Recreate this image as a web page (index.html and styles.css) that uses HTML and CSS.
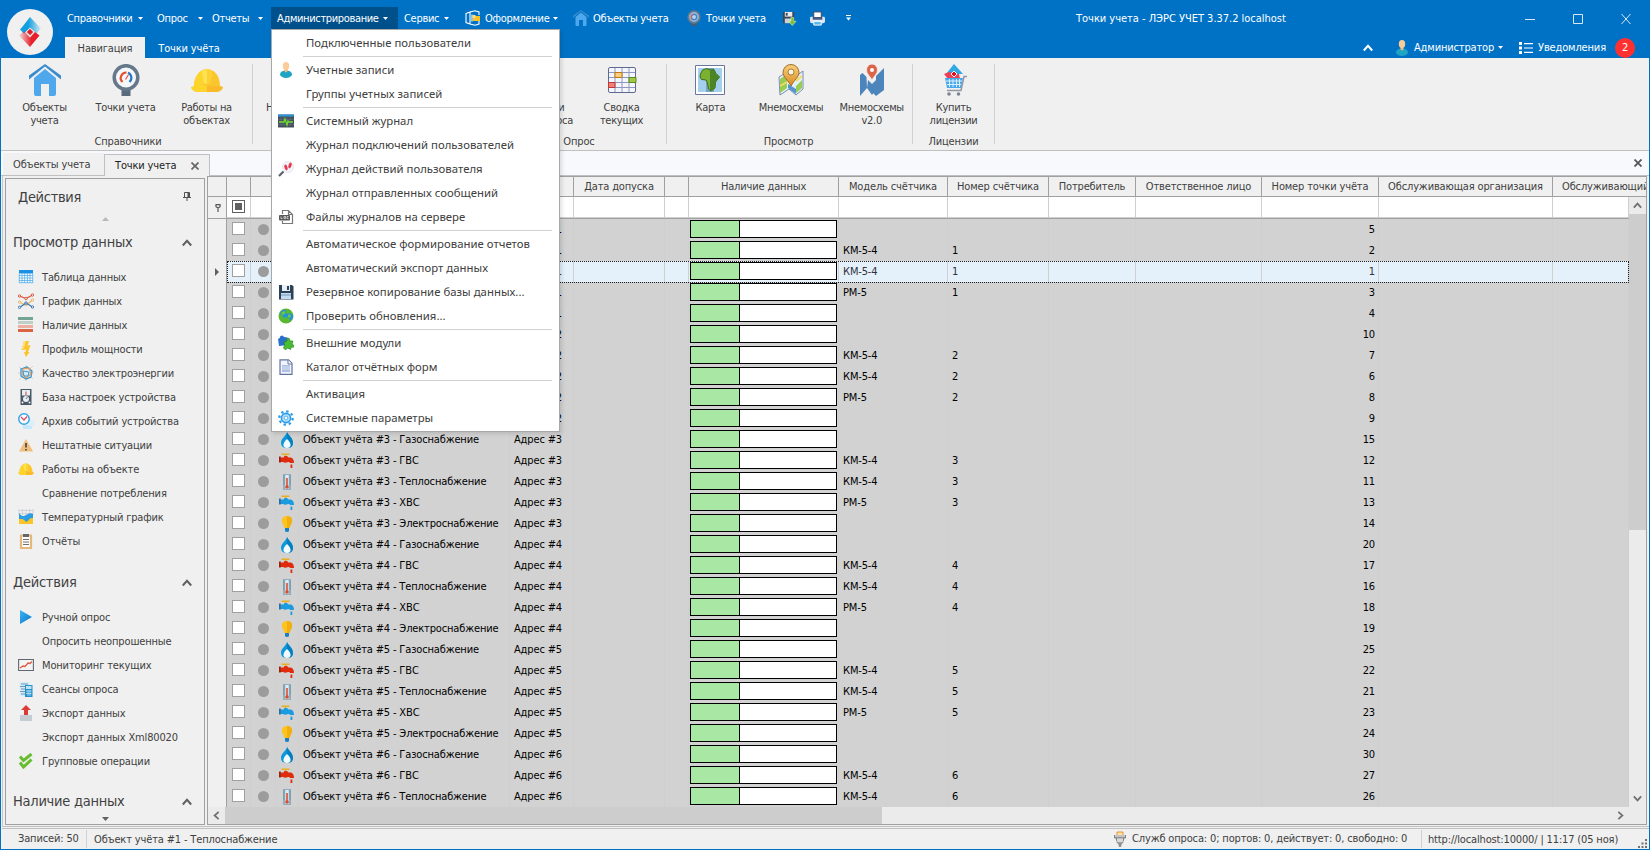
FILE: index.html
```html
<!DOCTYPE html>
<html lang="ru">
<head>
<meta charset="utf-8">
<title>Точки учета - ЛЭРС УЧЕТ 3.37.2 localhost</title>
<link rel="stylesheet" href="styles.css">
</head>
<body>
<svg class="defs" width="0" height="0">
<defs>
<linearGradient id="gBlue" x1="0" y1="0" x2="1" y2="0"><stop offset=".4" stop-color="#12a0e0"/><stop offset="1" stop-color="#12a0e0" stop-opacity=".1"/></linearGradient>
<linearGradient id="gRed" x1="0" y1="0" x2="1" y2="0"><stop offset="0" stop-color="#e8202c" stop-opacity=".1"/><stop offset=".6" stop-color="#e8202c"/></linearGradient>
<linearGradient id="gPlay" x1="0" y1="0" x2="1" y2="1"><stop offset="0" stop-color="#3cb4f4"/><stop offset="1" stop-color="#0a74c8"/></linearGradient>
<linearGradient id="gPin" x1="0" y1="0" x2="0" y2="1"><stop offset="0" stop-color="#fbd078"/><stop offset="1" stop-color="#dc8a20"/></linearGradient>
</defs>
<symbol id="house" viewBox="0 0 32 32"><path d="M5 14 16 5l11 9v16q0 2-2 2h-5V20h-8v12H7q-2 0-2-2z" fill="#4fa8ec"/><path d="M0 15.500 16 2.500l16 13v-4L16 0 0 11.500z" fill="#3a8ccc"/></symbol>
<symbol id="gauge" viewBox="0 0 32 32"><path d="M11.500 24h9v8h-9z" fill="#5a6b7c"/><circle cx="16" cy="13.500" r="11.800" fill="#f4f8fa" stroke="#66788a" stroke-width="3.500"/><path d="M12.500 18a5.500 5.500 0 0 1 4-9.500" fill="none" stroke="#e8502c" stroke-width="2.200"/><path d="M18 8.800a5.500 5.500 0 0 1 1.500 9.200" fill="none" stroke="#2878c8" stroke-width="2.200"/><path d="M15.500 15.500l3-5" stroke="#e85050" stroke-width="1.200"/></symbol>
<symbol id="gaugeSmall" viewBox="0 0 16 16"><path d="M5.500 12h5v4h-5z" fill="#4c5c70"/><circle cx="8" cy="7" r="5.800" fill="#90b8dc" stroke="#66788a" stroke-width="1.800"/><circle cx="8" cy="7" r="2.600" fill="#b8d4ec" stroke="#3c80c8" stroke-width="1.200"/><path d="M6 9a2.600 2.600 0 0 1 1.500-4.500" fill="none" stroke="#d8604c" stroke-width="1.200"/></symbol>
<symbol id="helmet" viewBox="0 0 32 32"><path d="M3 22C3 12 9 7 13 5.500Q16 4.500 19 5.500C24 7 29 12 29 22z" fill="#fbc62c"/><path d="M3 22C3 13 8 7 13 5.500L12 20l4 2v6H5q-5-2-5-5z" fill="#fdd42c"/><path d="M16 22h13l3 1q0 3-5 5H16z" fill="#fbb92c"/><path d="M11 7q5-3.500 10 0l-1.500 12q-3.500 2-7 0z" fill="#fee350"/><path d="M16 5.200q3 0 5 1.800l-1.500 12q-2 1-3.500 1z" fill="#fdd038"/></symbol>
<symbol id="summary" viewBox="0 0 32 32"><rect x="2.500" y="3.500" width="27" height="25" rx="1.500" fill="#f4f6fc" stroke="#5c6a94"/><path d="M9 4v24M16 4v24M23 4v24M3 8.500h26M3 13.500h26M3 18.500h26M3 23.500h26" stroke="#8c98c0" fill="none"/><path d="M9 8.500h7v5H9z" fill="#fcd078" stroke="#c07818"/><path d="M23 13.500h7v5h-7z" fill="#9ccc48" stroke="#5c8c14"/><path d="M2.500 18.500H9v5H2.500z" fill="#f08078" stroke="#c03830"/></symbol>
<symbol id="africa" viewBox="0 0 32 32"><path d="M1.500 1.500h29v29h-29z" fill="#fff" stroke="#6a789c"/><path d="M4 4h24v24H4z" fill="#a4d0ee"/><path d="M12 4h8v24h-8z" fill="#78a4c4"/><path d="M6.500 10l2-4 4-1.500 3.500 1.500 4-.5 2 4 3.500 3.500-4 5-.5 6-4 3-2.500-2-1-6-1.500-3-4.500-.5-1.500-2.500z" fill="#7cb030" stroke="#3c6c18"/><path d="M16 6l4-.5 2 4 3.500 3.500-4 5-.5 6-4 3-1-.8z" fill="#4c8428"/></symbol>
<symbol id="pinmap" viewBox="0 0 32 32"><path d="M4 13l8-5 8 5 8-6v18l-7 6-7-6-9 6z" fill="#e4f0f8" stroke="#788cb0"/><path d="M5 15l7-5v14l-7 5zM21 22l6-6v8l-6 5z" fill="#98cc54"/><path d="M13 20l8 5v5l-8-6z" fill="#5494d0"/><path d="M5 22l7-4M21 17l6-5" stroke="#f4dc60" stroke-width="2"/><path d="M16 22C13 16 8 13 8 8.500a8 8 0 0 1 16 0C24 13 19 16 16 22z" fill="url(#gPin)" stroke="#a06c2c"/><circle cx="16" cy="8" r="3" fill="#fff4d8" stroke="#9c8058"/></symbol>
<symbol id="pinmap2" viewBox="0 0 32 32"><path d="M4 11l2.500-2 4 4 .5 11-7 8zM12 16l4 4 4-4v9l-4 6-5-7zM20 12l8-8v22l-8 6-4-4 4-8z" fill="#4c84bc"/><path d="M16 16C14 12 10.500 10 10.500 6a5.500 6 0 0 1 11 0C21.500 10 18 12 16 16z" fill="#dc6448" stroke="#f0f0f0" stroke-width=".8"/><circle cx="16" cy="6" r="2" fill="#fff"/></symbol>
<symbol id="cart" viewBox="0 0 32 32"><path d="M8 10 16 0l9 10z" fill="#30a8e4"/><path d="M6 10l5-2 10 2 1 5H10z" fill="#ec4058"/><path d="M16 7l3 3-3 3-3-3z" fill="#e01020" stroke="#fff"/><path d="M7 14h18l-2 10H9z" fill="#48a8ec"/><path d="M8 17h16M9 20.500h14M11.500 15v8M15 15v8M18.500 15v8M21.500 15v8" stroke="#d8f0ff" fill="none"/><path d="M29 12.500h-3l-3 14H9" fill="none" stroke="#9098a4" stroke-width="1.500"/><circle cx="11" cy="30" r="1.800" fill="#7c8490"/><circle cx="20.500" cy="30" r="1.800" fill="#7c8490"/></symbol>
<symbol id="person" viewBox="0 0 16 16"><path d="M2 13C2 9.500 5 8.500 8 8.500s6 1 6 4.500q-2 3-6 3t-6-3z" fill="#20a4c4"/><path d="M6.500 7h3v2.500L8 10.500 6.500 9.500z" fill="#f0b880"/><ellipse cx="8" cy="4" rx="3.200" ry="4" fill="#fccc98"/></symbol>
<symbol id="palette" viewBox="0 0 16 16"><path d="M1 3.500l4-1.500v12l-4-1.500zM5 2 10 .700l4 1.300v3M5 14l5 1.300 4-1.300v-3M7 4.500v7" fill="none" stroke="#fff" stroke-width="1.100"/><path d="M8 6h7v5H8z" fill="#fcc020"/><path d="M7.500 5h3v3h-3z" fill="#fbe080"/></symbol>
<symbol id="disk2" viewBox="0 0 16 16"><path d="M1 1h12v12H1z" fill="#3c4454"/><path d="M3 1h8v5H3z" fill="#e8ecf0"/><path d="M4 2h2v3H4z" fill="#3c4454"/><path d="M3 8h7v5H3z" fill="#c8d0dc"/><path d="M9.500 7h3v4H15l-4 4.500L7 11h2.500z" fill="#78c030" stroke="#e0f4c8" stroke-width=".6"/></symbol>
<symbol id="printer" viewBox="0 0 16 16"><path d="M4 1h8v6H4z" fill="#fff" stroke="#445"/><path d="M1 6h2v3h10V6h2q1 0 1 2v3q0 2-2 2H2q-2 0-2-2V8q0-2 1-2z" fill="#e0e4f0"/><path d="M3 7h10v2H3z" fill="#50587c"/><path d="M4 11h8v4H4z" fill="#58b8f0" stroke="#fff"/></symbol>
<symbol id="monitor" viewBox="0 0 16 16"><path d="M0 1.500h16v13H0z" fill="#44505c"/><path d="M0 1.500h16v2H0z" fill="#2c98dc"/><path d="M3 4v9M6 4v9M9 4v9M12 4v9M0 6.500h16M0 11.500h16" stroke="#687480" stroke-width=".5"/><path d="M1 9h5l1-3 2 6 1-4 1 1h4" fill="none" stroke="#70dc30" stroke-width="1.300"/></symbol>
<symbol id="steps" viewBox="0 0 16 16"><circle cx="10" cy="6" r="5.500" fill="#f4f4fa" stroke="#dcdce8" stroke-width=".7"/><path d="M5.500 10.500 1 15" stroke="#58606c" stroke-width="2.200"/><ellipse cx="8" cy="6.500" rx="1.500" ry="3" fill="#e83850" transform="rotate(-20 8 6.500)"/><ellipse cx="12" cy="4.500" rx="1.500" ry="3" fill="#e83850" transform="rotate(20 12 4.500)"/></symbol>
<symbol id="doclog" viewBox="0 0 16 16"><path d="M4.500 5V1.500h6l4 4v9h-10V12M10.500 1.500v4h4" fill="#fff" stroke="#787878" stroke-width="1.200"/><rect x="1" y="6" width="11" height="5.500" rx="1" fill="#585858"/><path d="M3 7.500v2h1.500M6 7.500h1.500v2H6zM10.500 7.500H9v2h1.500" fill="none" stroke="#ddd" stroke-width=".8"/></symbol>
<symbol id="disk" viewBox="0 0 16 16"><path d="M1 1h13l1.500 1.500v13H1z" fill="#2c4058"/><path d="M4 1h8v6H4z" fill="#e8f0f8"/><path d="M9 2h2v4H9z" fill="#2c4058"/><path d="M3 9h10v6H3z" fill="#c4dcf0"/><path d="M3 11h10" stroke="#7898b4"/></symbol>
<symbol id="globe" viewBox="0 0 16 16"><circle cx="8" cy="8" r="7.500" fill="#5cb830"/><path d="M3 3q3-2 5-1.500L7.500 4 9 6l3-1 3 2v3l-3 3-1-3-2-1-3 1-2-3-2-1z" fill="#2494d8"/><path d="M3.500 4l3-1 1 2-2 2-2-1zM10 6.500l3 .5-1 3-2-1z" fill="#70c83c"/></symbol>
<symbol id="puzzle" viewBox="0 0 16 16"><path d="M0 4q2-.5 2.500-3Q5-.500 6 2l3.500.5V10L1 11z" fill="#2870c8"/><path d="M6 7l3-1q-1-3 1-3t2 3l3 0-1 3.500q2 0 2 1.700t-2.500.8l-1 2.500-3-1.500-2 2-2-2q2-3 .5-6z" fill="#48bc34" stroke="#208018" stroke-width=".6"/></symbol>
<symbol id="doc" viewBox="0 0 16 16"><path d="M2 .8h8.500l3.500 3.500v11H2z" fill="#f0f4fc" stroke="#6474a0" stroke-width="1.200"/><path d="M10 1v4h4" fill="#fff" stroke="#6474a0"/><path d="M4 6h8v7H4z" fill="#b0c0e4"/><path d="M4 8h8M4 10h8" stroke="#e4ecfc" stroke-width=".7"/></symbol>
<symbol id="gear" viewBox="0 0 16 16"><circle cx="8" cy="8" r="6.700" fill="none" stroke="#2c9ce8" stroke-width="2.200" stroke-dasharray="2.400 2.860"/><circle cx="8" cy="8" r="4.600" fill="#b8e0fa" stroke="#2c9ce8" stroke-width="1.600"/><circle cx="8" cy="8" r="1.900" fill="#fff" stroke="#58b4f0"/></symbol>
<symbol id="table" viewBox="0 0 16 16"><path d="M1 2h14v12H1z" fill="#fff"/><path d="M1 1h14v3.500H1z" fill="#1c90e4"/><path d="M1 6.500h14M1 9h14M1 11.500h14M1 13.700h14M1.300 4v10M4 4v10M6.700 4v10M9.400 4v10M12 4v10M14.700 4v10" stroke="#54aeea" stroke-width=".8"/></symbol>
<symbol id="chart" viewBox="0 0 16 16"><path d="M1.500 9 8 12.500 14.500 7" fill="none" stroke="#e8b868" stroke-width="1.300"/><path d="M1.500 14.500 8 10l6.500 4" fill="none" stroke="#3c78b4" stroke-width="1.300"/><path d="M1.500 3 8 5.500 14.500 2" fill="none" stroke="#d8583c" stroke-width="1.300"/><g fill="#f0f0f0"><g stroke="#e8b868"><circle cx="1.500" cy="9" r="1.200"/><circle cx="14.500" cy="7" r="1.200"/></g><g stroke="#d8583c"><circle cx="1.500" cy="3" r="1.200"/><circle cx="8" cy="5.500" r="1.200"/><circle cx="14.500" cy="2" r="1.200"/></g><g stroke="#3c78b4"><circle cx="1.500" cy="14.300" r="1.200"/><circle cx="8" cy="10" r="1.200"/><circle cx="14.500" cy="14" r="1.200"/></g></g></symbol>
<symbol id="bars" viewBox="0 0 16 16"><path d="M0 0h15v3H0z" fill="#74a494"/><path d="M0 4h15v3H0z" fill="#bcd0c8"/><path d="M0 8h15v3H0z" fill="#ecb0a0"/><path d="M0 12h15v3H0z" fill="#d86444"/></symbol>
<symbol id="bolt" viewBox="0 0 16 16"><path d="M6 0h5L9.500 4.500l3-.5L10 11h1.500L8 16l-2-5h1.500L8 8.500 3.500 9z" fill="#fcc428"/><path d="M6 0h2L6 7l-2.500 2z" fill="#fce080"/></symbol>
<symbol id="quality" viewBox="0 0 16 16"><path d="M1 2l14 12M15 1 1 15M8 0v16M0 8h16" stroke="#c8ccd0" stroke-width=".8"/><path d="M3 4l6-2 5 4-1 6-5 2-5-3z" fill="#d0ecfa" stroke="#2c90c8" stroke-width="1.200"/><path d="M5 4l6-1 2 6-5 4-4-4z" fill="none" stroke="#f09858" stroke-width="1.200"/><path d="M5 6l6 1-1 4-4 0z" fill="none" stroke="#3c98d0"/></symbol>
<symbol id="meter" viewBox="0 0 16 16"><path d="M2.500 0h11v16h-11z" fill="#485868"/><path d="M4 1h8v5.500H4z" fill="#e8eef2"/><path d="M8 6V2.500" stroke="#d83c3c"/><circle cx="8" cy="10" r="3" fill="#e8eef2"/><path d="M8 10l1.500-2" stroke="#687888"/><circle cx="4.500" cy="13.500" r=".9" fill="#fff"/><circle cx="11.500" cy="13.500" r=".9" fill="#fff"/></symbol>
<symbol id="clock" viewBox="0 0 16 16"><path d="M5 12h9v4H5z" fill="#c4e8fc"/><path d="M11 7h5v6h-5z" fill="#d8effc"/><circle cx="6" cy="6" r="5.200" fill="#f8fcff" stroke="#38a4e4" stroke-width="1.500"/><path d="M3 4l3 3 3-3.500" fill="none" stroke="#e04858" stroke-width="1.200"/></symbol>
<symbol id="warn" viewBox="0 0 16 16"><path d="M8 2l7 12.500H1z" fill="#f0bf7c"/><path d="M8 6v4.500M8 12v1.500" stroke="#505050" stroke-width="1.800"/></symbol>
<symbol id="temp" viewBox="0 0 16 16"><path d="M1 7h14v8H1z" fill="#fcc424"/><path d="M1 0v6M4.500 0v6M8 0v6M11.500 0v6M15 0v6M1 1.500h14M1 4.500h14" stroke="#c8ccd4" stroke-width=".8"/><path d="M1 4q3 5 7 2 4-3 7-1v4q-4 0-4 2l-3 2q-2-3-4-3H1z" fill="#2c9ce4"/></symbol>
<symbol id="clip" viewBox="0 0 16 16"><path d="M3 2.500h10V15H3z" fill="#fff" stroke="#e4b878" stroke-width="2.200"/><path d="M5 1h6v3H5z" fill="#606870"/><path d="M5 6.500h6M5 9h6M5 11.500h6" stroke="#707070"/></symbol>
<symbol id="play" viewBox="0 0 16 16"><path d="M2 1l12 7L2 15z" fill="url(#gPlay)"/></symbol>
<symbol id="trend" viewBox="0 0 16 16"><path d="M.600 2.500h14.800v11H.600z" fill="#f4f4f4" stroke="#606870" stroke-width="1.100"/><path d="M2 11l3-2 2 .5L10 6l2 .5L14 4.500" fill="none" stroke="#e05840" stroke-width="1.300"/></symbol>
<symbol id="session" viewBox="0 0 16 16"><path d="M1.500 1h10v14h-10z" fill="#d4ecf8"/><path d="M3 3h7M2 5.500h6M3 8h5M2 10.500h5M3 13h4" stroke="#6c98b0" stroke-width="1.200"/><path d="M7 4h7.500v12H7z" fill="#2490cc"/><path d="M8 5h5.500v3H8z" fill="#bce4f8"/><path d="M8 10h5.500M8 12.500h5.500M10 9v6M12 9v6" stroke="#d4effc" stroke-width=".7"/></symbol>
<symbol id="export" viewBox="0 0 16 16"><path d="M2 10h12v6H2z" fill="#c4ccd4"/><path d="M8 0l5 5h-3v5H6V5H3z" fill="#dc3c38"/></symbol>
<symbol id="checks" viewBox="0 0 16 16"><path d="M2 3.500l3.500 4L13.500 1M2 9.500l3.500 4.500 8-7.500" fill="none" stroke="#68bc30" stroke-width="3"/></symbol>
<symbol id="plug" viewBox="0 0 16 16"><path d="M5 1h6v4H5z" fill="#fce0a8" stroke="#e09830"/><path d="M2.500 4v3h11V4M4 7h8l-1.500 5h-5z" fill="#c4c4c4" stroke="#808080"/><path d="M6 12h4l-1 4H7z" fill="#909090"/><path d="M6 7v4M8 7v4M10 7v4" stroke="#eee"/></symbol>
<symbol id="gas" viewBox="0 0 16 16"><path d="M8 0C9 3 14 6 14 11q0 5-6 5t-6-5C2 6 7 4 8 0z" fill="#0c98dc"/><path d="M8 0c1 3 6 6 6 11q0 5-6 5z" fill="#0480c0"/><path d="M8 7q4 3.500 3.500 6.500-.5 2.500-3.500 2.500t-3.500-2.500Q4 10.500 8 7z" fill="#f0faff"/></symbol>
<symbol id="tapRed" viewBox="0 0 16 16"><path d="M2.500 1.300h8M6.500 1v4" stroke="#e8b020" stroke-width="1.500"/><path d="M1.500 4.500h3l1-1.500h2.500L9.500 4.500H12q3 1 3 5.500h-4q-.5-1.500-2-1-3 1.500-5 0h-3z" fill="#e02c0c"/><path d="M0 3.500h1.800v6H0z" fill="#982010"/><path d="M11.500 11.500h1.800V15h-1.800z" fill="#e02c0c"/></symbol>
<symbol id="tapBlue" viewBox="0 0 16 16"><path d="M2.500 1.300h8M6.500 1v4" stroke="#e8b020" stroke-width="1.500"/><path d="M1.500 4.500h3l1-1.500h2.500L9.500 4.500H12q3 1 3 5.500h-4q-.5-1.500-2-1-3 1.500-5 0h-3z" fill="#1c9ce0"/><path d="M0 3.500h1.800v6H0z" fill="#306c9c"/><path d="M11.500 11.500h1.800V15h-1.800z" fill="#1c9ce0"/></symbol>
<symbol id="heat" viewBox="0 0 16 16"><path d="M4 0h8v16H4z" fill="#90b0c0"/><path d="M6.300 1h3.400v14H6.300z" fill="#dcecf4"/><path d="M8 4v9" stroke="#dc4c30" stroke-width="1.600"/><circle cx="8" cy="13" r="1.800" fill="#dc4c30"/><path d="M10.500 2h1.500M10.500 4h1.500M10.500 6h1.500M10.500 8h1.500M10.500 10h1.500M4 2h1.500M4 4h1.500M4 6h1.500M4 8h1.500M4 10h1.500" stroke="#587888" stroke-width=".6"/></symbol>
<symbol id="bulb" viewBox="0 0 16 16"><path d="M8 0q5.200 0 5.200 5 0 1.800-1.400 3.500L10.500 12h-5L4.200 8.500Q2.800 6.800 2.800 5 2.800 0 8 0z" fill="#fcc41c"/><path d="M8 0q5.200 0 5.200 5 0 1.800-1.400 3.500L10.500 12H8z" fill="#f0b014"/><path d="M6 12h4v3.200q-2 1.600-4 0z" fill="#1c80c0"/></symbol>
<symbol id="caret" viewBox="0 0 5 3"><path d="M0 0h5L2.500 3z" fill="#fff"/></symbol>
<symbol id="up" viewBox="0 0 10 8"><path d="M.800 6.500 5 1.800l4.200 4.700" fill="none" stroke="currentColor" stroke-width="2"/></symbol>
</svg>

<header class="top">
  <div class="logo"><svg width="24" height="30" viewBox="0 0 24 30"><path d="M12 0 23 11.500l-4.500 5L12 10.500l-6 6L2 12.500l3-3.500z" fill="url(#gBlue)"/><path d="M12 30 1 18.500l5-4.500 6 6.500 5-5.500 4.500 3.500z" fill="url(#gRed)"/><path d="M12 11.300l3.700 3.700-3.700 3.700L8.300 15z" fill="#e01c2c" stroke="#f4f4f4" stroke-width="1"/></svg></div>
  <div class="bars">
    <div class="menubar">
      <span class="mi m1">Справочники<svg class="car"><use href="#caret"/></svg></span>
      <span class="mi m2">Опрос<svg class="car"><use href="#caret"/></svg></span>
      <span class="mi m3">Отчеты<svg class="car"><use href="#caret"/></svg></span>
      <span class="mi m4 open">Администрирование<svg class="car"><use href="#caret"/></svg></span>
      <span class="mi m5">Сервис<svg class="car"><use href="#caret"/></svg></span>
      <span class="mi m6"><svg class="i16"><use href="#palette"/></svg>Оформление<svg class="car"><use href="#caret"/></svg></span>
      <span class="mi m7"><svg class="i16"><use href="#house"/></svg>Объекты учета</span>
      <span class="mi m8"><svg class="i16"><use href="#gaugeSmall"/></svg>Точки учета</span>
      <span class="mi m9"><svg class="i14"><use href="#disk2"/></svg></span>
      <span class="mi m10"><svg class="i14"><use href="#printer"/></svg></span>
      <span class="mi m11"><svg width="5" height="6" viewBox="0 0 5 6"><path d="M0 0h5v1H0zM0 2.500h5L2.500 5.500z" fill="#fff"/></svg></span>
      <span class="apptitle">Точки учета - ЛЭРС УЧЕТ 3.37.2 localhost</span>
      <svg class="win" width="108" height="12" viewBox="0 0 108 12"><path d="M1 6.500h10M49.500 1.500h9v9h-9zM97.500 1l9 10M106.500 1l-9 10" fill="none" stroke="#d8e8f6"/></svg>
    </div>
    <div class="tabbar">
      <span class="rtab on">Навигация</span><span class="rtab off">Точки учёта</span>
      <span class="fill"></span>
      <svg class="upw"><use href="#up"/></svg>
      <span class="adm"><svg class="i16"><use href="#person"/></svg>Администратор<svg class="car"><use href="#caret"/></svg></span>
      <span class="ntf"><svg width="14" height="12" viewBox="0 0 14 12"><path d="M0 0h3v3H0zM0 4.500h3v3H0zM0 9h3v3H0zM5 1h9v1.200H5zM5 5.400h9v1.200H5zM5 9.800h9V11H5z" fill="#fff"/></svg>Уведомления</span>
      <b class="badge">2</b>
    </div>
  </div>
</header>

<section class="ribbon">
  <div class="grp g1">
    <div class="btns"><div class="rb"><svg><use href="#house"/></svg>Объекты<br>учета</div><div class="rb"><svg><use href="#gauge"/></svg>Точки учета</div><div class="rb"><svg><use href="#helmet"/></svg>Работы на<br>объектах</div></div>
    <div class="cap">Справочники</div>
  </div>
  <div class="grp g2">
    <div class="btns"><div class="rb lft"><svg></svg>Н</div><div class="rb cut"><svg></svg>и&nbsp;&nbsp;&nbsp;<br>оса</div><div class="rb"><svg><use href="#summary"/></svg>Сводка<br>текущих</div></div>
    <div class="cap">Опрос</div>
  </div>
  <div class="grp g3">
    <div class="btns"><div class="rb"><svg><use href="#africa"/></svg>Карта</div><div class="rb"><svg><use href="#pinmap"/></svg>Мнемосхемы</div><div class="rb"><svg><use href="#pinmap2"/></svg>Мнемосхемы<br>v2.0</div></div>
    <div class="cap">Просмотр</div>
  </div>
  <div class="grp g4">
    <div class="btns"><div class="rb"><svg><use href="#cart"/></svg>Купить<br>лицензии</div></div>
    <div class="cap">Лицензии</div>
  </div>
</section>

<nav class="tabs">
  <span class="dt">Объекты учета</span>
  <span class="dt sel">Точки учета<svg width="8" height="8" viewBox="0 0 8 8"><path d="M.500.500l7 7M7.500.500l-7 7" stroke="#666" stroke-width="1.700"/></svg></span>
  <span class="fill"></span>
  <svg class="closeall" width="8" height="8" viewBox="0 0 8 8"><path d="M.500.500l7 7M7.500.500l-7 7" stroke="#555" stroke-width="1.800"/></svg>
</nav>

<main class="work">
  <aside class="side">
    <div class="stitle">Действия<svg width="8" height="9" viewBox="0 0 8 9"><path d="M1.500 .500h5v5M1.500 .500v5M0 5.500h8M4 6v3" fill="none" stroke="#505050"/><path d="M4.500 1h2v4.500h-2z" fill="#505050"/></svg></div>
    <div class="tri"><svg width="7" height="4" viewBox="0 0 7 4"><path d="M0 4h7L3.500 0z" fill="#b8b8b8"/></svg></div>
    <div class="sh">Просмотр данных<svg class="chev"><use href="#up"/></svg></div>
    <ul class="acts">
      <li><svg><use href="#table"/></svg>Таблица данных</li>
      <li><svg><use href="#chart"/></svg>График данных</li>
      <li><svg><use href="#bars"/></svg>Наличие данных</li>
      <li><svg><use href="#bolt"/></svg>Профиль мощности</li>
      <li><svg><use href="#quality"/></svg>Качество электроэнергии</li>
      <li><svg><use href="#meter"/></svg>База настроек устройства</li>
      <li><svg><use href="#clock"/></svg>Архив событий устройства</li>
      <li><svg><use href="#warn"/></svg>Нештатные ситуации</li>
      <li><svg><use href="#helmet"/></svg>Работы на объекте</li>
      <li><svg></svg>Сравнение потребления</li>
      <li><svg><use href="#temp"/></svg>Температурный график</li>
      <li><svg><use href="#clip"/></svg>Отчёты</li>
    </ul>
    <div class="sh">Действия<svg class="chev"><use href="#up"/></svg></div>
    <ul class="acts">
      <li><svg><use href="#play"/></svg>Ручной опрос</li>
      <li><svg></svg>Опросить неопрошенные</li>
      <li><svg><use href="#trend"/></svg>Мониторинг текущих</li>
      <li><svg><use href="#session"/></svg>Сеансы опроса</li>
      <li><svg><use href="#export"/></svg>Экспорт данных</li>
      <li><svg></svg>Экспорт данных Xml80020</li>
      <li><svg><use href="#checks"/></svg>Групповые операции</li>
    </ul>
    <div class="sh last">Наличие данных<svg class="chev"><use href="#up"/></svg></div>
    <div class="tri dn"><svg width="7" height="4" viewBox="0 0 7 4"><path d="M0 0h7L3.500 4z" fill="#606060"/></svg></div>
  </aside>

  <section class="gridbox">
    <div class="row head" id="head"></div>
    <div class="body">
      <div class="rows" id="rows"></div>
      <div class="vs"><span class="sb"><svg class="sc"><use href="#up"/></svg></span><span class="thumb"></span><span class="sb end"><svg class="sc flip"><use href="#up"/></svg></span></div>
    </div>
    <div class="hs"><span class="sb"><svg class="sc toleft"><use href="#up"/></svg></span><span class="thumb"></span><span class="sb end"><svg class="sc toright"><use href="#up"/></svg></span></div>
  </section>
</main>

<footer class="status">
  <span class="s1">Записей: 50</span><span class="s2">Объект учёта #1 - Теплоснабжение</span>
  <span class="fill"></span>
  <svg class="i16"><use href="#plug"/></svg><span class="s3">Служб опроса: 0; портов: 0, действует: 0, свободно: 0</span><span class="s4">http://localhost:10000/ | 11:17 (05 ноя)</span>
  <svg class="grip" width="9" height="9" viewBox="0 0 9 9"><path d="M7 0h2v2H7zM7 3.500h2v2H7zM7 7h2v2H7zM3.500 3.500h2v2h-2zM3.500 7h2v2h-2zM0 7h2v2H0z" fill="#707070"/></svg>
</footer>

<ul class="drop">
  <li>Подключенные пользователи</li>
  <li class="sep"></li>
  <li><svg><use href="#person"/></svg>Учетные записи</li>
  <li>Группы учетных записей</li>
  <li class="sep"></li>
  <li><svg><use href="#monitor"/></svg>Системный журнал</li>
  <li>Журнал подключений пользователей</li>
  <li><svg><use href="#steps"/></svg>Журнал действий пользователя</li>
  <li>Журнал отправленных сообщений</li>
  <li><svg><use href="#doclog"/></svg>Файлы журналов на сервере</li>
  <li class="sep"></li>
  <li>Автоматическое формирование отчетов</li>
  <li>Автоматический экспорт данных</li>
  <li><svg><use href="#disk"/></svg>Резервное копирование базы данных...</li>
  <li><svg><use href="#globe"/></svg>Проверить обновления...</li>
  <li class="sep"></li>
  <li><svg><use href="#puzzle"/></svg>Внешние модули</li>
  <li><svg><use href="#doc"/></svg>Каталог отчётных форм</li>
  <li class="sep"></li>
  <li>Активация</li>
  <li><svg><use href="#gear"/></svg>Системные параметры</li>
</ul>
<script src="grid.js"></script>
</body>
</html>
```
FILE: styles.css
```css
*{box-sizing:border-box}
body{margin:0;width:1650px;height:850px;overflow:hidden;position:relative;display:flex;flex-direction:column;background:#f0f0f0;color:#404040;border:1px solid #0072c6;border-top:0;font:11px/13px "DejaVu Sans Condensed","DejaVu Sans",sans-serif;font-stretch:condensed;letter-spacing:-.15px;white-space:nowrap}
.defs{position:absolute}
ul{list-style:none;margin:0;padding:0}
svg{display:block;flex:none}
.fill{flex:1}
.i16{width:16px;height:16px}
.i14{width:15px;height:15px}
.car{width:5px;height:3px;position:absolute;right:10px;top:10px}

.top{height:58px;display:flex;background:#0072c6;color:#fff;flex:none}
.logo{width:46px;height:46px;margin:9px 12px 0 6px;border-radius:50%;background:#f0f0f0;display:flex;align-items:center;justify-content:center}
.bars{flex:1}
.menubar{height:37px;display:flex;padding-top:7px;letter-spacing:-.3px}
.mi{position:relative;height:22px;display:flex;align-items:center;gap:4px;flex:none;padding-left:2px}
.m1{width:88px;margin-right:2px}
.m2{width:54px;margin-right:1px}
.m3{width:61px}
.m4{width:127px;padding-left:6px;letter-spacing:-.35px}
.m5{width:55px;padding-left:6px}
.m6{width:113px;padding-left:12px}
.m7{width:112px;padding-left:7px}
.m8{width:103px;padding-left:8px}
.m9{width:29px;padding-left:1px}
.m10{width:34px;padding-left:0}
.m11{width:50px}
.m1 .car{right:10px}
.m2 .car{right:6px}
.m3 .car{right:8px}
.m5 .car{right:4px}
.m6 .car{right:8px}
.open{background:#00508c}
.apptitle{margin-left:182px;line-height:24px;letter-spacing:-.02px}
.win{margin:6px 17px 0 auto}
.tabbar{height:21px;display:flex;align-items:center}
.rtab{height:21px;line-height:24px;text-align:center}
.on{width:80px;background:#f0f0f0;color:#404040}
.off{width:88px}
.upw{width:10px;height:8px;margin-right:21px}
.adm{width:125px;display:flex;align-items:center;gap:4px;position:relative}
.adm .car{top:6px;right:16px}
.ntf{width:96px;display:flex;align-items:center;gap:5px}
.badge{width:20px;height:20px;margin-right:14px;border-radius:50%;background:#ff3030;text-align:center;line-height:20px;font-weight:400}

.ribbon{height:93px;display:flex;flex:none;padding-top:6px;border-bottom:1px solid #c0c0c0}
.grp{height:80px;border-right:1px solid #d0d0d0}
.g1{width:252px;padding-left:3px}
.g2{width:414px}
.g3{width:246px}
.g4{width:82px}
.btns{display:flex;height:70px}
.rb{width:81px;text-align:center;letter-spacing:-.3px}
.rb svg{width:32px;height:32px;margin:0 auto 5px}
.g2 .btns{padding-left:13px}
.rb.lft{text-align:left;width:226px}
.rb.cut{text-align:right;width:81px;margin-right:8px}
.g3 .btns{padding-left:3px}
.cap{text-align:center;margin-top:1px}
.g2 .cap{padding-left:239px}
.g3 .cap{padding-right:2px}

.tabs{height:25px;display:flex;align-items:flex-end;background:#f8f9fd;flex:none;padding-left:2px;border-bottom:1px solid #c0c0c0}
.dt{width:101px;height:22px;line-height:24px;padding-left:10px;background:#f0f0f0}
.sel{width:106px;margin-bottom:-1px;border:1px solid #c0c0c0;border-bottom:0;color:#222;display:flex;align-items:center;gap:15px}
.closeall{margin:0 7px 8px 0}

.work{height:651px;flex:none;display:flex;padding:0 0 2px 3px;border-left:1px solid #c8c8c8;margin-left:1px;border-bottom:1px solid #c0c0c0}
.side{width:200px;height:647px;flex:none;margin:2px 2px 0 -1px;border:1px solid #a0a0a0;padding:0 12px 0 7px}
.stitle{height:36px;padding:10px 1px 0 5px;display:flex;justify-content:space-between;font-size:14.500px;line-height:17px;letter-spacing:-.3px}
.stitle svg{margin-top:3px}
.tri{height:11px;display:flex;justify-content:center;padding:2px 0 0 5px}
.sh{height:33px;display:flex;align-items:center;justify-content:space-between;font-size:14.500px;letter-spacing:-.25px}
.chev{width:10px;height:8px;color:#606060}
.acts{padding:6px 0 13px 5px}
.acts li{height:24px;display:flex;align-items:center;gap:8px}
.acts svg{width:16px;height:16px}
.dn{padding-top:0}
.sh.last{height:31px}

.gridbox{width:1440px;height:649px;flex:none;border:1px solid #a0a0a0}
.row{display:grid;grid-template-columns:19px 24px 25px 23px 211px 64px 91px 24px 150px 109px 101px 87px 126px 117px 174px 1fr;height:21px;background:#d2d2d2;color:#000}
.row>div{display:flex;align-items:center;overflow:hidden;border-right:1px solid #cfcfcf;padding-left:4px}
.row>div.ind{background:#f0f0f0;border-right-color:#a0a0a0;padding-left:7px}
.row.head{height:20px;background:#f0f0f0;color:#404040;border-bottom:1px solid #a0a0a0}
.row.head>div{justify-content:center;border-right-color:#a0a0a0;padding:0}
.row.head>div:last-child{justify-content:flex-start;padding-left:9px;border:0}
.row.filter{height:22px;background:#fff;border-bottom:1px solid #a0a0a0;box-shadow:inset 0 -1px #d0d0d0}
.row .num{padding-left:4px}
.row .no{justify-content:flex-end;padding:0 3px 0 0}
.row .ck{padding-left:5px}
.row .st{padding-left:7px}
.row .ic{padding-left:3px}
.cb{width:13px;height:13px;background:#fff;border:1px solid #a0a0a0;margin-bottom:2px}
.cb.mid{border-color:#606060;background:#606060;box-shadow:inset 0 0 0 2px #fff;margin-bottom:3px}
.dot{width:11px;height:11px;border-radius:50%;background:#9c9c9c}
.row .bar{padding-left:1px;align-items:flex-start;padding-top:1px}
.meter{width:147px;height:18px;border:1px solid #000;background:#fff}
.meter i{display:block;height:16px;width:49px;background:#a8e8a4;border-right:1px solid #000}
.row.cur{background:linear-gradient(90deg,transparent 19px,#e4f1fa 19px);position:relative;color:#303040}
.row.cur::after{content:"";position:absolute;left:19px;right:0;top:0;height:20px;border:1px dotted #202020}
.body{display:flex;height:610px}
.rows{width:1421px}
.vs{width:17px;background:#ebebeb;display:flex;flex-direction:column}
.sb{width:17px;height:17px;display:flex;align-items:center;justify-content:center}
.sb.end{margin:auto 0 0}
.vs .thumb{height:316px;background:#cdcdcd}
.sc{width:9px;height:7px;color:#707070}
.flip{transform:rotate(180deg)}
.toleft{transform:rotate(-90deg)}
.toright{transform:rotate(90deg)}
.hs{height:17px;background:#ebebeb;display:flex}
.hs .thumb{width:657px;background:#cdcdcd}
.hs .sb.end{margin:0 17px 0 auto}

.status{height:21px;margin:1px 0 1px 1px;flex:none;display:flex;align-items:center;border-top:1px solid #c0c0c0}
.s1{width:85px;padding-left:16px;border-right:1px solid #d0d0d0;line-height:18px}
.s2{padding-left:7px}
.s3{width:294px;padding-left:4px;border-right:1px solid #d0d0d0;line-height:18px}
.s4{width:216px;padding-left:6px}
.grip{margin:9px 2px 0 0}

.drop{position:absolute;left:270px;top:29px;width:289px;height:403px;background:#fff;border:1px solid #a8a8a8;padding-top:1px;box-shadow:2px 2px 4px rgba(0,0,0,.12);font:11.350px/24px "Noto Sans","Open Sans",sans-serif;letter-spacing:.02px}
.drop li{height:24px;padding-left:34px;position:relative}
.drop li.sep{height:3px;margin:0 7px 0 31px;padding:0;background:linear-gradient(#fff 1px,#d0d0d0 1px,#d0d0d0 2px,#fff 2px)}
.drop svg{position:absolute;left:6px;top:4px;width:16px;height:16px}
```
FILE: grid.js
```js
const heads = ['', '', '', '', '', '', 'Дата допуска', '', 'Наличие данных', 'Модель счётчика', 'Номер счётчика', 'Потребитель', 'Ответственное лицо', 'Номер точки учёта', 'Обслуживающая организация', 'Обслуживающий'];
const kinds = [
  ['Газоснабжение', 'gas', ''],
  ['ГВС', 'tapRed', 'КМ-5-4'],
  ['Теплоснабжение', 'heat', 'КМ-5-4'],
  ['ХВС', 'tapBlue', 'РМ-5'],
  ['Электроснабжение', 'bulb', '']
];
const numbers = [5, 2, 1, 3, 4, 10, 7, 6, 8, 9, 15, 12, 11, 13, 14, 20, 17, 16, 18, 19, 25, 22, 21, 23, 24, 30, 27, 26];

document.getElementById('head').innerHTML = heads.map(h => `<div>${h}</div>`).join('');

const funnel = '<svg width="6" height="8" viewBox="0 0 6 8"><path d="M1 .7h4v2L3 4 1 2.700zM3 4v4" fill="none" stroke="#555" stroke-width="1.200"/></svg>';
const arrow = '<svg width="4" height="8" viewBox="0 0 4 8"><path d="M0 0l4 4-4 4z" fill="#606060"/></svg>';

let html = `<div class="row filter"><div class="ind">${funnel}</div><div class="ck"><span class="cb mid"></span></div>${'<div></div>'.repeat(14)}</div>`;
numbers.forEach((n, i) => {
  const obj = Math.floor(i / 5) + 1;
  const [name, icon, model] = kinds[i % 5];
  const cur = i === 2;
  html += `<div class="row${cur ? ' cur' : ''}"><div class="ind">${cur ? arrow : ''}</div>
<div class="ck"><span class="cb"></span></div><div class="st"><span class="dot"></span></div>
<div class="ic"><svg class="i16"><use href="#${icon}"/></svg></div>
<div>Объект учёта #${obj} - ${name}</div><div>Адрес #${obj}</div><div></div><div></div>
<div class="bar"><span class="meter"><i></i></span></div>
<div>${model}</div><div class="num">${model ? obj : ''}</div><div></div><div></div>
<div class="no">${n}</div><div></div><div></div></div>`;
});
document.getElementById('rows').innerHTML = html;
```
